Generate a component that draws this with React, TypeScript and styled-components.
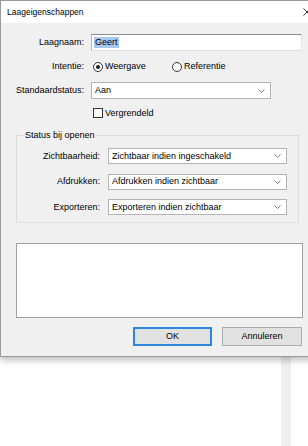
import React from "react";
import styled, { createGlobalStyle } from "styled-components";

const Global = createGlobalStyle`
  html, body { margin: 0; padding: 0; background: #fff; }
  body { font-family: "Liberation Sans", Arial, sans-serif; }
`;

const Desktop = styled.div`
  position: relative;
  width: 308px;
  height: 446px;
  overflow: hidden;
  background: #fff;
`;

const BackApp = styled.div`
  display: grid;
  grid-template-columns: 281px 10px 1fr;
  height: 100%;
`;

const BackPane = styled.div<{ $tone: string }>`
  background: ${(p) => p.$tone};
`;

const Window = styled.div`
  position: absolute;
  top: 0;
  left: 0;
  width: 325px;
  box-sizing: border-box;
  background: #f0f0f0;
  border: 1px solid #9a9a9a;
  box-shadow: 0 3px 7px rgba(0, 0, 0, 0.28);
  font: 9px/11px "Liberation Sans", Arial, sans-serif;
  color: #000;
`;

const TitleBar = styled.div`
  display: flex;
  align-items: center;
  justify-content: space-between;
  height: 22px;
  background: #fff;
  padding-left: 6px;
`;

const Title = styled.span`
  font-size: 8.5px;
  color: #000;
`;

const CloseButton = styled.div`
  width: 34px;
  height: 22px;
  display: flex;
  align-items: center;
  justify-content: center;
`;

const Body = styled.div`
  padding: 11px 0 10px 0;
`;

const TopForm = styled.div`
  display: grid;
  grid-template-columns: 83px 211px;
  grid-template-rows: 17px 17px 17px 14px;
  column-gap: 7px;
  row-gap: 7px;
`;

const Label = styled.span`
  align-self: center;
  text-align: right;
  white-space: nowrap;
`;

const TextBox = styled.div`
  box-sizing: border-box;
  height: 17px;
  display: flex;
  align-items: center;
  padding-left: 2px;
  background: #fff;
  border: 1px solid;
  border-color: #8a8a8a #e2e2e2 #e2e2e2 #b8b8b8;
`;

const Selected = styled.span`
  background: #a6c8ef;
  padding: 0 1px;
  line-height: 11px;
`;

const RadioGroup = styled.div`
  display: grid;
  grid-template-columns: 79px auto;
  align-items: center;
  padding-left: 2px;
`;

const Option = styled.label`
  display: flex;
  align-items: center;
  gap: 2px;
  white-space: nowrap;
`;

const RadioDot = styled.span<{ $checked?: boolean }>`
  box-sizing: border-box;
  width: 10px;
  height: 10px;
  border-radius: 50%;
  border: 1px solid #333;
  background: #fff;
  display: flex;
  align-items: center;
  justify-content: center;
  &::after {
    content: "";
    width: 4px;
    height: 4px;
    border-radius: 50%;
    background: ${(p) => (p.$checked ? "#1a1a1a" : "transparent")};
  }
`;

const CheckBox = styled.span`
  box-sizing: border-box;
  width: 10px;
  height: 10px;
  border: 1px solid #333;
  background: #fff;
`;

const CheckRow = styled.div`
  display: flex;
  align-items: center;
  padding-left: 2px;
`;

const SelectBox = styled.div<{ $width: number; $height: number }>`
  box-sizing: border-box;
  width: ${(p) => p.$width}px;
  height: ${(p) => p.$height}px;
  display: flex;
  align-items: center;
  justify-content: space-between;
  padding-left: 3px;
  background: #fff;
  border: 1px solid #b4b4b4;
  white-space: nowrap;
`;

const Chevron = styled.span`
  width: 17px;
  display: flex;
  align-items: center;
  justify-content: center;
`;

const Group = styled.fieldset`
  box-sizing: border-box;
  width: 283px;
  margin: 10px 0 0 15px;
  padding: 7px 11px 7px 0;
  border: 1px solid #dcdcdc;
  min-inline-size: 0;
`;

const Legend = styled.legend`
  margin-left: 6px;
  padding: 0 2px;
  line-height: 11px;
`;

const GroupForm = styled.div`
  display: grid;
  grid-template-columns: 83px 179px;
  grid-auto-rows: 16px;
  column-gap: 8px;
  row-gap: 9.5px;
`;

const TextArea = styled.div`
  box-sizing: border-box;
  width: 287px;
  height: 75px;
  margin: 20px 0 0 15px;
  background: #fff;
  border: 1px solid #a0a0a0;
`;

const ButtonRow = styled.div`
  display: flex;
  gap: 10px;
  margin: 9px 0 0 132px;
`;

const Button = styled.div<{ $primary?: boolean; $width: number }>`
  box-sizing: border-box;
  width: ${(p) => p.$width}px;
  height: 19px;
  display: flex;
  align-items: center;
  justify-content: center;
  background: #e1e1e1;
  border: ${(p) => (p.$primary ? "2px solid #2f86dd" : "1px solid #adadad")};
`;

const ChevronIcon = () => (
  <svg width="7" height="4" viewBox="0 0 7 4">
    <path d="M0.5 0.5 L3.5 3.5 L6.5 0.5" fill="none" stroke="#808080" strokeWidth="1" />
  </svg>
);

const Select = ({ value, width, height }: { value: string; width: number; height: number }) => (
  <SelectBox $width={width} $height={height}>
    <span>{value}</span>
    <Chevron>
      <ChevronIcon />
    </Chevron>
  </SelectBox>
);

export default function App() {
  return (
    <>
      <Global />
      <Desktop>
        <BackApp>
          <BackPane $tone="#ffffff" />
          <BackPane $tone="#efefef" />
          <BackPane $tone="#ffffff" />
        </BackApp>
        <Window>
          <TitleBar>
            <Title>Laageigenschappen</Title>
            <CloseButton>
              <svg width="8" height="8" viewBox="0 0 8 8">
                <path d="M0.5 0.5 L7.5 7.5 M7.5 0.5 L0.5 7.5" stroke="#222" strokeWidth="0.9" fill="none" />
              </svg>
            </CloseButton>
          </TitleBar>
          <Body>
            <TopForm>
              <Label>Laagnaam:</Label>
              <TextBox>
                <Selected>Geert</Selected>
              </TextBox>
              <Label>Intentie:</Label>
              <RadioGroup>
                <Option>
                  <RadioDot $checked />
                  Weergave
                </Option>
                <Option>
                  <RadioDot />
                  Referentie
                </Option>
              </RadioGroup>
              <Label>Standaardstatus:</Label>
              <Select value="Aan" width={180} height={17} />
              <span />
              <CheckRow>
                <Option>
                  <CheckBox />
                  Vergrendeld
                </Option>
              </CheckRow>
            </TopForm>
            <Group>
              <Legend>Status bij openen</Legend>
              <GroupForm>
                <Label>Zichtbaarheid:</Label>
                <Select value="Zichtbaar indien ingeschakeld" width={179} height={16} />
                <Label>Afdrukken:</Label>
                <Select value="Afdrukken indien zichtbaar" width={179} height={16} />
                <Label>Exporteren:</Label>
                <Select value="Exporteren indien zichtbaar" width={179} height={16} />
              </GroupForm>
            </Group>
            <TextArea />
            <ButtonRow>
              <Button $primary $width={79}>OK</Button>
              <Button $width={80}>Annuleren</Button>
            </ButtonRow>
          </Body>
        </Window>
      </Desktop>
    </>
  );
}
